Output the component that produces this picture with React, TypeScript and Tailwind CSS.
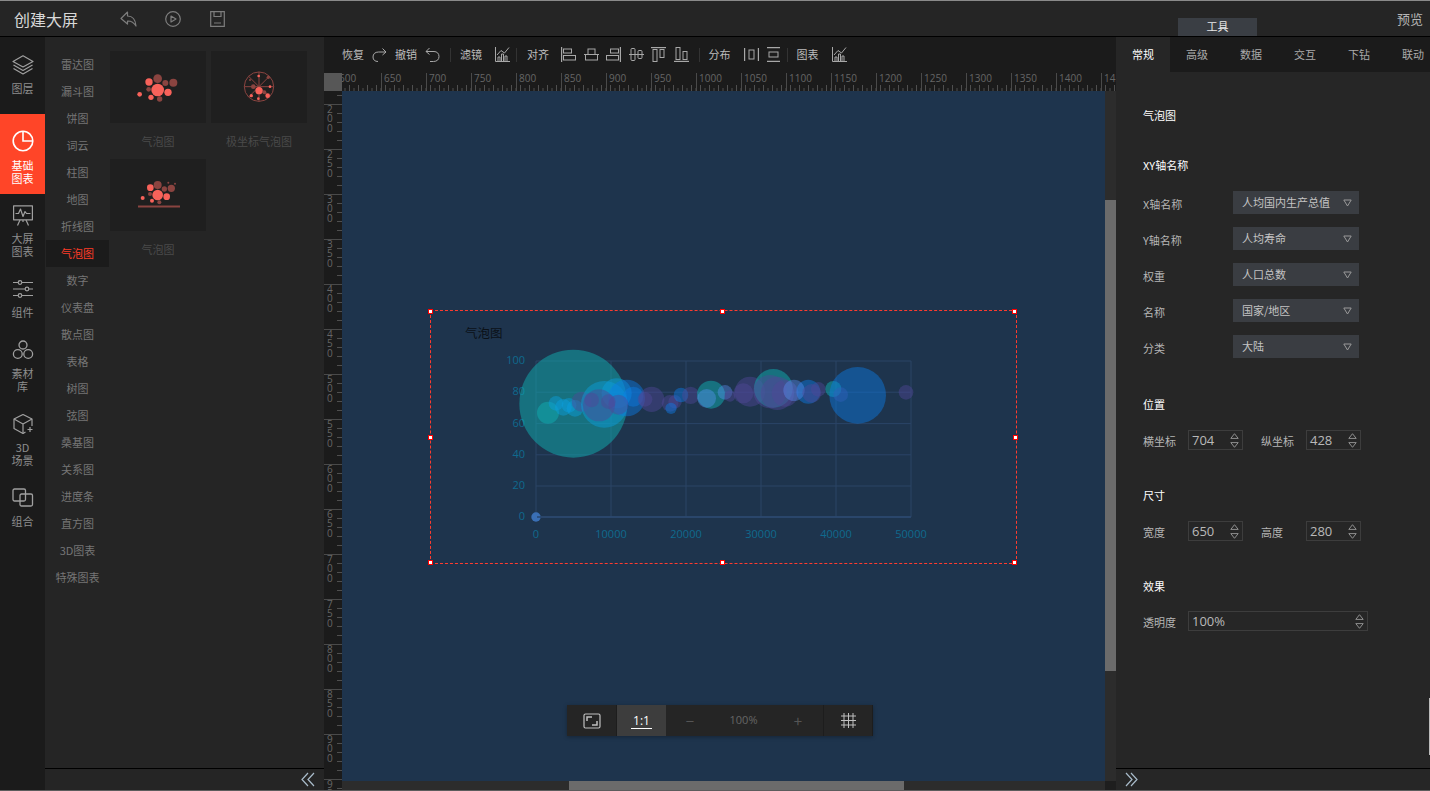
import React from "react";

const BRIGHT = "#f8625a";
const DIM = "#8a4440";

function Svg({ w, h, vb, children, className }: { w: number; h: number; vb?: string; children: React.ReactNode; className?: string }) {
  return (
    <svg width={w} height={h} viewBox={vb ?? `0 0 ${w} ${h}`} fill="none" className={className ?? "block shrink-0"}>
      {children}
    </svg>
  );
}

const railIcons: Record<string, React.ReactNode> = {
  layers: (
    <Svg w={22} h={20}>
      <g stroke="#a0a0a0" strokeWidth="1.2" strokeLinejoin="round">
        <path d="M11 .8 21 6.5 11 12 1 6.5Z" />
        <path d="M1.5 10 11 15.5 20.5 10" />
        <path d="M1.5 13.5 11 19 20.5 13.5" />
      </g>
    </Svg>
  ),
  pie: (
    <Svg w={22} h={22}>
      <g stroke="#fff" strokeWidth="1.6">
        <circle cx="11" cy="11" r="9.8" />
        <path d="M11 1.2V11H20.8" />
      </g>
    </Svg>
  ),
  screen: (
    <Svg w={22} h={21}>
      <g stroke="#a0a0a0" strokeWidth="1.2" strokeLinejoin="round">
        <rect x="1.6" y=".8" width="18.8" height="14" />
        <path d="M3.5 8.5H6.5L8.5 4 11 11.5 13 6.5 14.5 8.5H18.5" />
        <path d="M8 15 5.5 20.5M14 15 16.5 20.5M11 15V17" />
      </g>
    </Svg>
  ),
  sliders: (
    <Svg w={22} h={18}>
      <g stroke="#a0a0a0" strokeWidth="1.2">
        <path d="M1 2.5H6M10 2.5H21M1 9H13M17 9H21M1 15.5H6M10 15.5H21" />
        <circle cx="8" cy="2.5" r="1.8" />
        <circle cx="15" cy="9" r="1.8" />
        <circle cx="8" cy="15.5" r="1.8" />
      </g>
    </Svg>
  ),
  cubes: (
    <Svg w={22} h={20}>
      <g stroke="#a0a0a0" strokeWidth="1.3">
        <circle cx="11" cy="5" r="4" />
        <circle cx="5.8" cy="14" r="4.4" />
        <circle cx="16.2" cy="14" r="4.4" />
      </g>
    </Svg>
  ),
  cube: (
    <Svg w={22} h={20}>
      <g stroke="#a0a0a0" strokeWidth="1.2" strokeLinejoin="round">
        <path d="M13.5 18 11 19.5 2 14.5V5L11 .5 20 5V12" />
        <path d="M2 5 11 10 20 5M11 10V19.5" />
        <path d="M15.5 15.5H20.5M18 13V18" />
      </g>
    </Svg>
  ),
  merge: (
    <Svg w={22} h={19}>
      <g stroke="#a0a0a0" strokeWidth="1.3">
        <rect x="1" y="1" width="12.5" height="12" rx="1.5" />
        <rect x="8" y="6" width="12.5" height="12" rx="1.5" />
      </g>
    </Svg>
  ),
};

const rail = [
  { icon: "layers", label: ["图层"], box: "h-[77px] pt-[18px]", gap: "mt-[7px]" },
  { icon: "pie", label: ["基础", "图表"], box: "h-[80px] pt-[16px] bg-[#ff4528] text-white", gap: "mt-[7px]" },
  { icon: "screen", label: ["大屏", "图表"], box: "h-[64px] pt-[11px]", gap: "mt-[6px]" },
  { icon: "sliders", label: ["组件"], box: "h-[61px] pt-[22px]", gap: "mt-[8px]" },
  { icon: "cubes", label: ["素材", "库"], box: "h-[74px] pt-[21px]", gap: "mt-[7px]" },
  { icon: "cube", label: ["3D", "场景"], box: "h-[74px] pt-[21px]", gap: "mt-[7px]" },
  { icon: "merge", label: ["组合"], box: "h-[61px] pt-[21px]", gap: "mt-[8px]" },
];

const subs = ["雷达图", "漏斗图", "饼图", "词云", "柱图", "地图", "折线图", "气泡图", "数字", "仪表盘", "散点图", "表格", "树图", "弦图", "桑基图", "关系图", "进度条", "直方图", "3D图表", "特殊图表"];

function Dots({ pts, ox, oy, fill }: { pts: number[][]; ox: number; oy: number; fill: string }) {
  return (
    <>
      {pts.map((p, i) => (
        <circle key={i} cx={(p[0] - ox) / 3} cy={(p[1] - oy) / 3} r={p[2] / 3} fill={fill} />
      ))}
    </>
  );
}

function Thumb1() {
  return (
    <Svg w={96} h={72}>
      <Dots ox={330} oy={153} fill={DIM} pts={[[473, 236, 13], [520, 248, 12], [496, 249, 9], [446, 268, 7], [479, 297, 8]]} />
      <Dots ox={330} oy={153} fill={BRIGHT} pts={[[447, 246, 11], [473, 270, 19], [504, 277, 11], [453, 292, 8], [419, 283, 7]]} />
    </Svg>
  );
}
function Thumb2() {
  const cx = (777 - 633) / 3;
  const cy = (260 - 153) / 3;
  return (
    <Svg w={96} h={72}>
      <g stroke={DIM} strokeWidth="1">
        <circle cx={cx} cy={cy} r={14.7} />
        <path d={`M${cx - 14.7} ${cy}H${cx + 14.7}M${cx} ${cy - 14.7}V${cy + 14.7}M${cx - 10.4} ${cy - 10.4}L${cx + 10.4} ${cy + 10.4}M${cx + 10.4} ${cy - 10.4}L${cx - 10.4} ${cy + 10.4}`} />
      </g>
      <Dots ox={633} oy={153} fill={DIM} pts={[[760, 260, 7], [805, 232, 5], [750, 240, 3], [793, 277, 6]]} />
      <Dots ox={633} oy={153} fill={BRIGHT} pts={[[777, 272, 11], [776, 228, 4], [810, 260, 4], [803, 287, 7], [754, 287, 5], [775, 296, 4]]} />
    </Svg>
  );
}
function Thumb3() {
  return (
    <Svg w={96} h={72}>
      <Dots ox={330} oy={477} fill={DIM} pts={[[473, 555, 12], [514, 565, 11], [493, 567, 8], [450, 582, 6], [478, 607, 6], [505, 548, 3], [525, 551, 3]]} />
      <Dots ox={330} oy={477} fill={BRIGHT} pts={[[473, 585, 16], [451, 563, 10], [500, 590, 10], [456, 602, 6], [428, 594, 6]]} />
      <path d="M28 47.5H70" stroke={DIM} strokeWidth="2" />
    </Svg>
  );
}

const S = { stroke: "#a8a8a8", strokeWidth: 1 };
const tb = {
  redo: (
    <Svg w={15} h={15}>
      <path d="M10.5 1.5 14 5 10.5 8M14 5H6.5C3 5 1 7 1 10S3 14.5 6 14.5" {...S} />
    </Svg>
  ),
  undo: (
    <Svg w={15} h={15}>
      <path d="M4.5 1 1 4.5 4.5 7.5M1 4.5H9C12 4.5 14 6.5 14 9.5S12 14.5 8.5 14.5H5" {...S} />
    </Svg>
  ),
  chart: (
    <Svg w={15} h={15}>
      <path d="M.5 0V14.5H15M3 14V10H5V14M6.5 14V7H8.5V14M10 14V9H12V14" {...S} />
      <path d="M2 8 6 3.5 9.5 6 14 .5" {...S} />
    </Svg>
  ),
  a1: (
    <Svg w={15} h={15}>
      <path d="M.5 0V15" {...S} strokeWidth={1.4} />
      <rect x="2.5" y="2" width="8" height="4" {...S} />
      <rect x="2.5" y="8.5" width="12" height="4.5" {...S} />
    </Svg>
  ),
  a2: (
    <Svg w={15} h={15}>
      <path d="M0 7.5H15" {...S} />
      <rect x="4" y="2" width="7" height="5.5" {...S} />
      <rect x="1.5" y="7.5" width="12" height="5.5" {...S} />
    </Svg>
  ),
  a3: (
    <Svg w={15} h={15}>
      <path d="M14.5 0V15" {...S} strokeWidth={1.4} />
      <rect x="4.5" y="2" width="8" height="4" {...S} />
      <rect x=".5" y="8.5" width="12" height="4.5" {...S} />
    </Svg>
  ),
  a4: (
    <Svg w={15} h={15}>
      <path d="M0 7.5H15" {...S} />
      <rect x="2" y="1.5" width="4" height="12" rx="1" {...S} />
      <rect x="9" y="3.5" width="4" height="8" rx="1" {...S} />
    </Svg>
  ),
  a5: (
    <Svg w={15} h={15}>
      <path d="M0 .5H15" {...S} strokeWidth={1.4} />
      <rect x="2" y="2.5" width="4" height="12" {...S} />
      <rect x="9" y="2.5" width="4" height="8" {...S} />
    </Svg>
  ),
  a6: (
    <Svg w={15} h={15}>
      <path d="M0 14.5H15" {...S} strokeWidth={1.4} />
      <rect x="2" y=".5" width="4" height="12" {...S} />
      <rect x="9" y="4.5" width="4" height="8" {...S} />
    </Svg>
  ),
  d1: (
    <Svg w={15} h={15}>
      <path d="M.5 1V14M14.5 1V14" {...S} strokeWidth={1.4} />
      <rect x="5" y="3" width="5" height="9" {...S} />
    </Svg>
  ),
  d2: (
    <Svg w={15} h={15}>
      <path d="M1 .5H14M1 14.5H14" {...S} strokeWidth={1.4} />
      <rect x="3" y="5" width="9" height="5" {...S} />
    </Svg>
  ),
};

function Sep({ cls }: { cls: string }) {
  return <div className={`w-px h-[14px] bg-[#333] ${cls}`} />;
}
function TbText({ t, cls }: { t: string; cls: string }) {
  return <span className={`text-[11px] leading-[14px] text-[#bdbdbd] -mt-[1px] ${cls}`}>{t}</span>;
}

function Toolbar() {
  return (
    <div className="h-[35px] bg-[#1b1b1b] flex items-center pl-[18px]">
      <TbText t="恢复" cls="" />
      <div className="ml-[8px]">{tb.redo}</div>
      <TbText t="撤销" cls="ml-[8px]" />
      <div className="ml-[8px]">{tb.undo}</div>
      <Sep cls="ml-[10px]" />
      <TbText t="滤镜" cls="ml-[9px]" />
      <div className="ml-[13px]">{tb.chart}</div>
      <Sep cls="ml-[6px]" />
      <TbText t="对齐" cls="ml-[10px]" />
      <div className="ml-[12px] flex gap-[7.5px]">
        {tb.a1}
        {tb.a2}
        {tb.a3}
        {tb.a4}
        {tb.a5}
        {tb.a6}
      </div>
      <Sep cls="ml-[10px]" />
      <TbText t="分布" cls="ml-[9px]" />
      <div className="ml-[13px] flex gap-[7px]">
        {tb.d1}
        {tb.d2}
      </div>
      <Sep cls="ml-[6px]" />
      <TbText t="图表" cls="ml-[9px]" />
      <div className="ml-[13px]">{tb.chart}</div>
    </div>
  );
}

function HRuler() {
  const labels: number[] = [];
  for (let v = 600; v <= 1450; v += 50) labels.push(v);
  return (
    <div className="h-[19px] flex bg-[#1b1b1b] pt-px">
      <div className="w-[18px] shrink-0 bg-[#575757] relative z-10" />
      <div className="flex-1 overflow-x-clip">
        <div className="flex -ml-[6px] w-[900px]">
          {labels.map((v) => (
            <div key={v} className="w-[45px] h-[18px] shrink-0 border-l border-[#4a4a4a] flex flex-col">
              <div className="h-[12px] pl-[2px] text-[10px] leading-[10px] text-[#666] font-['Open_Sans',sans-serif]">{v}</div>
              <svg width="44" height="6" className="block" fill="none">
                {Array.from({ length: 10 }).map((_, i) => (
                  <path key={i} d={`M${3.5 + i * 4.5} ${i % 2 ? 3 : 0}V6`} stroke="#4f4f4f" />
                ))}
              </svg>
            </div>
          ))}
        </div>
      </div>
    </div>
  );
}

function VRuler() {
  const labels: number[] = [];
  for (let v = 150; v <= 950; v += 50) labels.push(v);
  return (
    <div className="w-[18px] shrink-0 bg-[#1b1b1b] overflow-hidden">
      <div className="-mt-[32px]">
        {labels.map((v) => (
          <div key={v} className="h-[45px] border-t border-[#4a4a4a] flex justify-between">
            <div className="w-[10px] pl-[3px] text-[10px] leading-[9.33px] text-[#666] font-['Open_Sans',sans-serif]">
              {String(v)
                .split("")
                .map((c, i) => (
                  <div key={i}>{c}</div>
                ))}
            </div>
            <svg width="5" height="44" className="block" fill="none">
              {[8.5, 17.5, 26.5, 35.5].map((y) => (
                <path key={y} d={`M0 ${y}H5`} stroke="#4f4f4f" />
              ))}
            </svg>
          </div>
        ))}
      </div>
    </div>
  );
}

const TEAL = "rgba(16,173,178,.5)";
const BLUE = "rgba(12,125,230,.45)";
const PUR = "rgba(80,72,150,.45)";
const CYAN = "rgba(10,160,225,.45)";
const LB = "rgba(94,151,255,.38)";

const z7 = (x: number, y: number, r: number, c: string) => [420 + x / 3, 300 + y / 3, r / 3, c] as const;
const z8 = (x: number, y: number, r: number, c: string) => [700 + x / 3, 300 + y / 3, r / 3, c] as const;

const bubbles = [
  z7(460, 311, 162, TEAL),
  z7(384, 338, 33, TEAL),
  z7(408, 310, 22, CYAN),
  z7(430, 322, 25, CYAN),
  z7(447, 316, 22, CYAN),
  z7(465, 325, 25, CYAN),
  z7(485, 305, 30, PUR),
  z7(553, 313, 70, CYAN),
  z7(590, 280, 45, CYAN),
  z7(620, 294, 55, BLUE),
  z7(640, 290, 30, BLUE),
  z7(537, 316, 48, PUR),
  z7(515, 300, 22, PUR),
  z7(565, 305, 22, PUR),
  z7(595, 314, 30, PUR),
  z7(675, 298, 22, PUR),
  z7(695, 298, 38, PUR),
  z7(750, 310, 25, PUR),
  z7(765, 305, 20, PUR),
  z7(753, 325, 17, BLUE),
  z7(783, 285, 22, BLUE),
  z7(812, 286, 26, PUR),
  z8(33, 284, 42, TEAL),
  z8(20, 295, 28, LB),
  z8(75, 277, 22, LB),
  z8(90, 288, 17, PUR),
  z8(150, 275, 45, PUR),
  z8(130, 280, 30, PUR),
  z8(220, 265, 58, TEAL),
  z8(232, 280, 50, PUR),
  z8(210, 275, 50, PUR),
  z8(255, 280, 40, PUR),
  z8(325, 275, 36, BLUE),
  z8(282, 271, 32, LB),
  z8(335, 280, 28, PUR),
  z8(355, 268, 22, PUR),
  z8(400, 267, 24, TEAL),
  z8(422, 284, 22, PUR),
  z8(473, 286, 85, BLUE),
  z8(618, 277, 22, PUR),
];

function Chart() {
  const xs = [536, 611, 686, 761, 836, 911];
  const ys = [361, 392.2, 423.6, 454.8, 486, 517];
  const num = { fontFamily: "'Open Sans',sans-serif", fontSize: 11, fill: "#0f6a8e" };
  return (
    <svg width="587" height="254" viewBox="430 310 587 254" className="block" fill="none">
      <text x="465" y="338" fill="#0b1118" fontSize="12.5" fontFamily="'Noto Sans CJK SC',sans-serif">
        气泡图
      </text>
      {xs.map((x) => (
        <path key={x} d={`M${x} 361V517`} stroke="#2a4467" />
      ))}
      {ys.map((y) => (
        <path key={y} d={`M536 ${y}H911`} stroke="#2a4467" />
      ))}
      <path d="M536 517H911" stroke="#2d4a72" strokeWidth="1.5" />
      {[100, 80, 60, 40, 20, 0].map((v, i) => (
        <text key={v} x="525" y={ys[i] + 3} textAnchor="end" {...num}>
          {v}
        </text>
      ))}
      {[0, 10000, 20000, 30000, 40000, 50000].map((v, i) => (
        <text key={v} x={xs[i]} y="538" textAnchor="middle" {...num}>
          {v}
        </text>
      ))}
      {bubbles.map((b, i) => (
        <circle key={i} cx={b[0]} cy={b[1]} r={b[2]} fill={b[3]} />
      ))}
      <circle cx="536" cy="517" r="4.7" fill="#3a6fb5" />
      <path d="M537 517H541" stroke="#1e334c" />
    </svg>
  );
}

const handles = [
  "left-[-2px] top-[-1px]",
  "left-[290px] top-[-1px]",
  "right-0 top-[-1px]",
  "left-[-2px] top-[125px]",
  "right-[-1px] top-[125px]",
  "left-[-2px] bottom-[-1px]",
  "left-[290px] bottom-[-1px]",
  "right-0 bottom-[-1px]",
];

function ZoomBar() {
  return (
    <div className="absolute left-[225px] top-[614px] h-[31px] w-[306px] bg-[#252525] flex items-center text-[#888] shadow-[0_1px_4px_rgba(0,0,0,.3)]">
      <div className="w-[50px] h-full flex items-center justify-center border-r border-[#1d1d1d]">
        <svg width="18" height="16" fill="none" stroke="#c0c0c0">
          <rect x="1" y="1" width="16" height="14" rx="1.5" strokeWidth="1.2" />
          <path d="M4 8V4H9M14 8V12H9" strokeWidth="1.5" />
        </svg>
      </div>
      <div className="w-[49px] h-full bg-[#3d3d3d] flex items-center justify-center">
        <span className="text-[12px] leading-[15px] text-white border-b border-white px-[2px] font-['Open_Sans',sans-serif]">1:1</span>
      </div>
      <div className="w-[48px] text-center text-[15px] leading-none text-[#555]">−</div>
      <div className="w-[59px] text-center text-[11px] text-[#666] font-['Open_Sans',sans-serif]">100%</div>
      <div className="w-[50px] text-center text-[15px] leading-none text-[#555]">+</div>
      <div className="w-[50px] h-full flex items-center justify-center border-l border-r border-[#1d1d1d]">
        <svg width="15" height="15" fill="none" stroke="#c0c0c0">
          <path d="M3 0V15M7.5 0V15M12 0V15M0 3H15M0 7.5H15M0 12H15" />
        </svg>
      </div>
    </div>
  );
}

function Canvas() {
  return (
    <div className="flex-1 flex min-h-0">
      <VRuler />
      <div className="flex-1 flex flex-col min-w-0">
        <div className="flex-1 flex min-h-0">
          <div className="flex-1 bg-[#1e344d] relative">
            <div className="absolute left-[88px] top-[219px] w-[587px] h-[254px] border border-dashed border-[#ff3b2f]">
              <div className="-m-px">
                <Chart />
              </div>
              {handles.map((h) => (
                <div key={h} className={`absolute ${h} w-[3px] h-[3px] bg-white outline outline-1 outline-[#f00]`} />
              ))}
            </div>
            <ZoomBar />
          </div>
          <div className="w-[11px] bg-[#2c2c2c]">
            <div className="h-[109px]" />
            <div className="h-[471px] bg-[#6b6b6b]" />
          </div>
        </div>
        <div className="h-[9px] bg-[#2c2c2c] flex">
          <div className="w-[227px]" />
          <div className="w-[335px] bg-[#6b6b6b]" />
          <div className="flex-1" />
          <div className="w-[11px] bg-[#1e1e1e]" />
        </div>
      </div>
    </div>
  );
}

function Tri({ up, color = "#9a9a9a" }: { up?: boolean; color?: string }) {
  return (
    <svg width="9" height="8" fill="none" stroke={color} className="block">
      {up ? <path d="M4.5 1 8.2 7H.8Z" /> : <path d="M.8 1H8.2L4.5 7Z" />}
    </svg>
  );
}

function MiniTri({ up }: { up?: boolean }) {
  return (
    <svg width="9" height="6" fill="none" stroke="#8f8f8f" className="block">
      {up ? <path d="M4.5 .7 8.2 5.4H.8Z" /> : <path d="M.8 .6H8.2L4.5 5.3Z" />}
    </svg>
  );
}

function Select({ value, label }: { value: string; label: string }) {
  return (
    <div className="flex h-[23px]">
      <div className="w-[90px] pt-[6px] text-[11px] leading-[14px] text-[#b5b5b5]">{label}</div>
      <div className="w-[126px] h-[23px] bg-[#3a3d42] flex items-center justify-between pl-[9px] pr-[7px]">
        <span className="text-[11px] leading-[14px] text-[#c4c4c4] -mt-[2px]">{value}</span>
        <Tri />
      </div>
    </div>
  );
}

function Num({ v, cls }: { v: string; cls: string }) {
  return (
    <div className={`${cls} h-[20px] border border-[#3d3d3d] flex items-center justify-between pl-[3px] pr-[3px]`}>
      <span className="text-[13px] leading-[16px] text-[#b9b9b9] font-['Open_Sans',sans-serif] -mt-[1px]">{v}</span>
      <div className="flex flex-col gap-[3px]">
        <MiniTri up />
        <MiniTri />
      </div>
    </div>
  );
}

function Lab({ t, cls }: { t: string; cls: string }) {
  return <div className={`text-[11px] leading-[14px] text-[#b5b5b5] pt-[4px] ${cls}`}>{t}</div>;
}
function Head({ t, cls }: { t: string; cls: string }) {
  return <div className={`h-[16px] text-[11px] leading-[14px] text-white ${cls}`}>{t}</div>;
}

function RightPanel() {
  const tabs = ["常规", "高级", "数据", "交互", "下钻", "联动"];
  return (
    <div className="w-[314px] shrink-0 bg-[#262626] flex flex-col relative">
      <div className="h-[35px] flex bg-[#1b1b1b] shrink-0">
        {tabs.map((t, i) => (
          <div key={t} className={`w-[54px] shrink-0 flex items-center justify-center text-[11px] ${i === 0 ? "bg-[#262626] text-white" : "text-[#aaa]"}`}>
            {t}
          </div>
        ))}
      </div>
      <div className="flex-1 pl-[27px] pt-[36px]">
        <Head t="气泡图" cls="" />
        <Head t="XY轴名称" cls="mt-[34px]" />
        <div className="mt-[17px] flex flex-col gap-[13px]">
          <Select label="X轴名称" value="人均国内生产总值" />
          <Select label="Y轴名称" value="人均寿命" />
          <Select label="权重" value="人口总数" />
          <Select label="名称" value="国家/地区" />
          <Select label="分类" value="大陆" />
        </div>
        <Head t="位置" cls="mt-[39px]" />
        <div className="mt-[17px] flex">
          <Lab t="横坐标" cls="w-[45px]" />
          <Num v="704" cls="w-[55px]" />
          <Lab t="纵坐标" cls="w-[45px] ml-[18px]" />
          <Num v="428" cls="w-[55px]" />
        </div>
        <Head t="尺寸" cls="mt-[38px]" />
        <div className="mt-[17px] flex">
          <Lab t="宽度" cls="w-[45px]" />
          <Num v="650" cls="w-[55px]" />
          <Lab t="高度" cls="w-[45px] ml-[18px]" />
          <Num v="280" cls="w-[55px]" />
        </div>
        <Head t="效果" cls="mt-[38px]" />
        <div className="mt-[16px] flex">
          <Lab t="透明度" cls="w-[45px]" />
          <Num v="100%" cls="w-[180px]" />
        </div>
      </div>
      <div className="h-[22px] border-t border-black flex items-center pl-[9px] shrink-0">
        <svg width="14" height="15" fill="none" stroke="#a9bccb" strokeWidth="1.2">
          <path d="M1 1 7 7.5 1 14M6 1 12 7.5 6 14" />
        </svg>
      </div>
      <div className="absolute right-0 top-[661px] w-px h-[57px] bg-[#bbb]" />
    </div>
  );
}

export default function App() {
  return (
    <div className="w-[1430px] h-[791px] overflow-hidden flex flex-col bg-[#252525] border-t border-b border-t-[#8a8a8a] border-b-[#5c5c5c] font-['Noto_Sans_CJK_SC','Noto_Sans',sans-serif]">
      <div className="h-[35px] shrink-0 bg-[#252525] flex items-center pl-[14px] relative">
        <span className="text-[16px] leading-[20px] text-[#d8d8d8]">创建大屏</span>
        <div className="ml-[42px]">
          <svg width="17" height="16" className="block" fill="none" stroke="#7d7d7d" strokeWidth="1.2" strokeLinejoin="round">
            <path d="M7.5 1 1 7.5 7.5 13V10C11 9.8 13.5 11 16 15 15.5 8.5 12 5 7.5 5Z" />
          </svg>
        </div>
        <div className="ml-[28px]">
          <svg width="16" height="16" className="block" fill="none" stroke="#7d7d7d" strokeWidth="1.2" strokeLinejoin="round">
            <circle cx="8" cy="8" r="7.3" />
            <path d="M6 5 11 8 6 11Z" />
          </svg>
        </div>
        <div className="ml-[29px]">
          <svg width="15" height="16" className="block" fill="none" stroke="#7d7d7d" strokeWidth="1.2">
            <path d="M.7 .7H14.3V15.3H.7Z" />
            <path d="M4 1V5.5H11V1M4 12H11" />
          </svg>
        </div>
        <div className="absolute left-[1178px] top-[17px] w-[79px] h-[18px] bg-[#3a3e44] flex items-center justify-center text-[11px] leading-[14px] pb-[2px] text-[#e8e8e8]">工具</div>
        <span className="absolute right-[7px] top-[9px] text-[13px] leading-[18px] text-[#b5b5b5]">预览</span>
      </div>
      <div className="h-px bg-black shrink-0" />
      <div className="flex-1 flex min-h-0">
        <div className="w-[45px] shrink-0 bg-[#1b1b1b] text-[#8d8d8d]">
          {rail.map((r) => (
            <div key={r.icon} className={`${r.box} flex flex-col items-center`}>
              {railIcons[r.icon]}
              <div className={`${r.gap} text-[11px] leading-[13px] text-center`}>
                {r.label.map((l) => (
                  <div key={l}>{l}</div>
                ))}
              </div>
            </div>
          ))}
        </div>
        <div className="w-[279px] shrink-0 flex flex-col">
          <div className="flex-1 flex pt-[14px] min-h-0">
            <div className="w-[63px] ml-px shrink-0">
              {subs.map((s) => (
                <div key={s} className={`h-[27px] flex items-center justify-center text-[11px] ${s === "气泡图" ? "bg-[#1b1b1b] text-[#ff3b28]" : "text-[#767676]"}`}>
                  {s}
                </div>
              ))}
            </div>
            <div className="ml-px grid grid-cols-[96px_96px] gap-x-[5px] content-start">
              {[
                { n: "气泡图", c: <Thumb1 /> },
                { n: "极坐标气泡图", c: <Thumb2 /> },
                { n: "气泡图", c: <Thumb3 /> },
              ].map((t, i) => (
                <div key={i} className="h-[108px]">
                  <div className="h-[72px] bg-[#1f1f1f]">{t.c}</div>
                  <div className="h-[36px] flex items-center justify-center text-[11px] text-[#4a4a4a]">{t.n}</div>
                </div>
              ))}
            </div>
          </div>
          <div className="h-[22px] border-t border-black flex items-center justify-end pr-[9px] shrink-0">
            <svg width="14" height="15" fill="none" stroke="#a9bccb" strokeWidth="1.2">
              <path d="M7 1 1 7.5 7 14M13 1 7 7.5 13 14" />
            </svg>
          </div>
        </div>
        <div className="flex-1 flex flex-col min-w-0">
          <Toolbar />
          <HRuler />
          <Canvas />
        </div>
        <RightPanel />
      </div>
    </div>
  );
}
